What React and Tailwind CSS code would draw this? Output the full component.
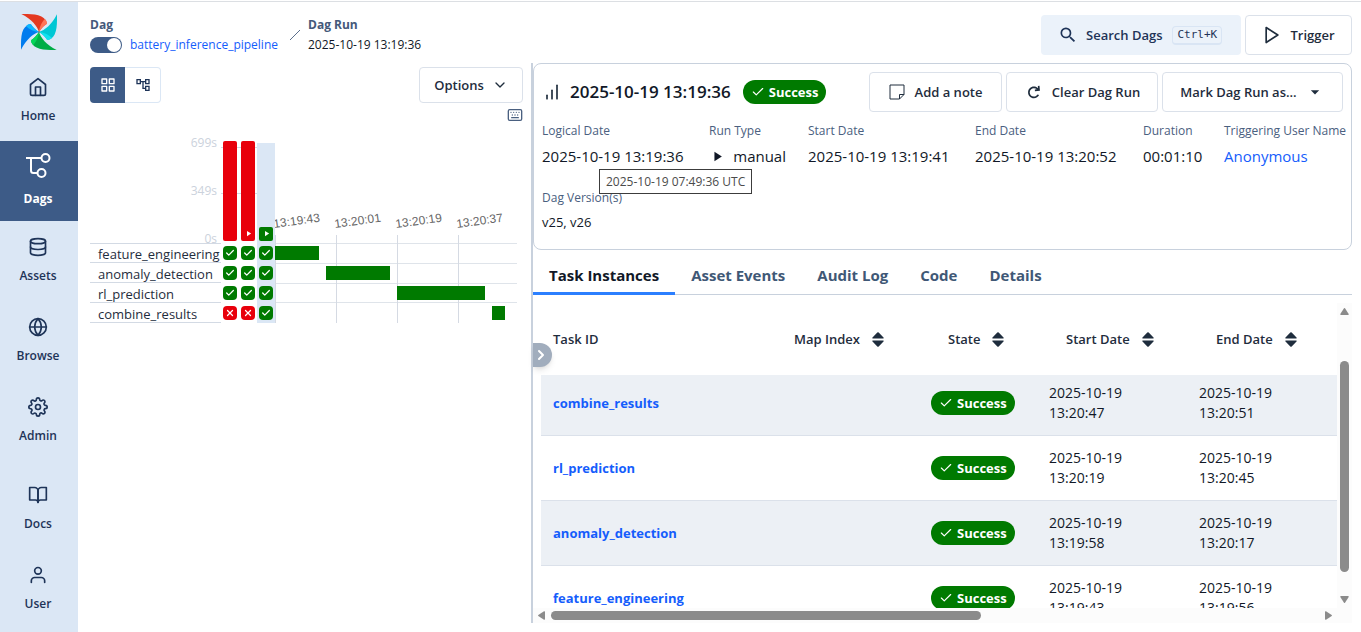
import React from "react";
import { FiHome, FiDatabase, FiGlobe, FiSettings, FiBookOpen, FiUser, FiGrid, FiPlay, FiBarChart, FiCheck, FiX, FiChevronDown, FiChevronRight } from "react-icons/fi";
import { MdSearch, MdOutlineAccountTree, MdPlayArrow, MdArrowDropDown } from "react-icons/md";
import { CgRedo } from "react-icons/cg";
import { Keyboard } from "lucide-react";

const BLADES = [
  { angle: 0, dark: "#E43921", light: "#FF7557" },
  { angle: 90, dark: "#00C7D4", light: "#11E1EE" },
  { angle: 180, dark: "#00AD46", light: "#04D659" },
  { angle: 270, dark: "#017CEE", light: "#0CB6FF" },
];

function Pinwheel() {
  return (
    <svg viewBox="0 0 106 106" className="size-[36px]" aria-hidden="true">
      {BLADES.map((b) => (
        <g key={b.angle} transform={`rotate(${b.angle} 53 53)`}>
          <path d="M1 0C20 0 44 -1 60 7C70 12 76 20 76 29C68 34 60 42 53 53C48 36 32 16 1 0Z" fill={b.dark} />
          <path d="M70 15C76 20 78 26 75 30C68 34 60 42 53 53C54 40 61 24 70 15Z" fill={b.light} />
        </g>
      ))}
      <circle cx="53" cy="53" r="2" fill="#51504F" />
    </svg>
  );
}

function DagGlyph() {
  return (
    <svg viewBox="0 0 26 26" className="size-[26px]" fill="none" stroke="currentColor" strokeWidth="2" aria-hidden="true">
      <path d="M1 5H16M6 5V17.500a2.500 2.500 0 0 0 2.500 2.500H12" />
      <circle cx="20.500" cy="5" r="4" />
      <circle cx="16.500" cy="20" r="4" />
    </svg>
  );
}

function NoteGlyph() {
  return (
    <svg viewBox="0 0 16 16" className="size-4" fill="none" stroke="currentColor" strokeLinejoin="round" aria-hidden="true">
      <path d="M1 1H15V10.500L10.500 15H1ZM15 10.500H10.500V15" />
    </svg>
  );
}

function SortGlyph() {
  return (
    <svg viewBox="0 0 12 15" className="h-[15px] w-3" fill="currentColor" aria-hidden="true">
      <path d="M5.300 0.600q.7-.7 1.400 0L11.500 5.400q.6.600-.2 1H.7q-.8-.4-.2-1z" />
      <path d="M5.300 14.400q.7.700 1.400 0L11.500 9.600q.6-.6-.2-1H.7q-.8.400-.2 1z" />
    </svg>
  );
}

function NavItem({ icon: Icon, label, active }) {
  return (
    <a
      href="#"
      className={
        active
          ? "flex h-20 flex-col items-center gap-[14px] bg-[#3d5b87] pt-[14px] pr-[2px] text-white"
          : "flex h-20 flex-col items-center gap-[10px] pt-[15px] pr-[2px] text-[#1e3458]"
      }
    >
      <span className="flex h-[22px] items-center">
        <Icon size={20} />
      </span>
      <span className={active ? "text-xs font-bold" : "text-xs font-semibold"}>{label}</span>
    </a>
  );
}

function Success() {
  return (
    <span className="inline-flex h-6 items-center gap-1 rounded-full bg-[#007a00] px-2 text-[13px] font-bold text-white">
      <FiCheck size={14} strokeWidth={2} />
      Success
    </span>
  );
}

const RUNS = [
  { bar: "h-[100px] bg-[#e8000b]", play: false, states: [1, 1, 1, 0] },
  { bar: "h-[100px] bg-[#e8000b]", play: true, states: [1, 1, 1, 0] },
  { bar: "h-[14px] bg-[#007a00]", play: true, selected: true, states: [1, 1, 1, 1] },
];
const TASKS = ["feature_engineering", "anomaly_detection", "rl_prediction", "combine_results"];

function RunColumn({ run }) {
  return (
    <div className="relative flex w-[18px] flex-col justify-end">
      <div className={run.selected ? "flex h-[180px] flex-col justify-end bg-[#dbe7f5]" : "flex flex-col justify-end"}>
        <button
          aria-label="Dag run"
          className={`mx-auto mb-[2px] flex w-[14px] items-end justify-center rounded-[2px] pb-[3px] text-white ${run.bar}`}
        >
          {run.play && <MdPlayArrow size={9} />}
        </button>
        {run.states.map((ok, i) => (
          <div key={i} className="flex h-5 items-center justify-center">
            <button
              aria-label={ok ? "Success" : "Failed"}
              className={
                ok
                  ? "flex size-[14px] items-center justify-center rounded bg-[#007a00] text-white"
                  : "flex size-[14px] items-center justify-center rounded bg-[#e8000b] text-white"
              }
            >
              {ok ? <FiCheck size={10} strokeWidth={3} /> : <FiX size={10} strokeWidth={3} />}
            </button>
          </div>
        ))}
      </div>
    </div>
  );
}

function Gantt() {
  const ticks = ["13:19:43", "13:20:01", "13:20:19", "13:20:37"];
  const bars = [
    [0, 44],
    [51, 64],
    [122, 88],
    [217, 13],
  ];
  return (
    <svg viewBox="0 0 242 113" className="h-[113px] w-[242px] self-end overflow-visible" aria-label="Task durations">
      {[33, 53, 73, 92].map((y) => (
        <rect key={y} x="0" y={y} width="242" height="1" fill="#dfe4ea" />
      ))}
      {[0, 61, 122, 183].map((x) => (
        <rect key={x} x={x} y="25" width="1" height="88" fill="#d5dae3" />
      ))}
      {bars.map(([x, w], i) => (
        <rect key={x} x={x} y={36 + i * 20} width={w} height="14" fill="#007a00" />
      ))}
      {ticks.map((t, i) => (
        <text
          key={t}
          transform={`translate(${i * 61 - 1} 18) rotate(-8)`}
          className="font-['Liberation_Sans',Arial,sans-serif] text-xs"
          fill="#666"
        >
          {t}
        </text>
      ))}
    </svg>
  );
}

const ROWS = [
  { id: "combine_results", start: "13:20:47", end: "13:20:51" },
  { id: "rl_prediction", start: "13:20:19", end: "13:20:45" },
  { id: "anomaly_detection", start: "13:19:58", end: "13:20:17" },
  { id: "feature_engineering", start: "13:19:43", end: "13:19:56" },
];

function Stat({ label, children }) {
  return (
    <div>
      <dt className="text-xs leading-5 font-medium whitespace-nowrap text-[#4a6080]">{label}</dt>
      <dd className="mt-[5px] flex items-center text-[15px] leading-5 whitespace-nowrap text-[#111827]">{children}</dd>
    </div>
  );
}

const OUTLINE = "flex items-center rounded border border-[#dbe1ea] bg-white text-[13px] font-semibold text-[#1f2d3d]";
const TABS = ["Asset Events", "Audit Log", "Code", "Details"];

export default function App() {
  return (
    <div className="h-screen overflow-hidden bg-white pt-px font-['Open_Sans','Noto_Sans',sans-serif] text-sm text-[#1f2d3d]">
      <div className="flex h-full border-t border-[#dcdfe3]">
        <nav className="flex w-[78px] shrink-0 flex-col justify-between bg-[#dbe7f5] pb-[3px]">
          <div>
            <a href="#" aria-label="Airflow" className="flex h-[59px] justify-center pt-3">
              <Pinwheel />
            </a>
            <NavItem icon={FiHome} label="Home" />
            <NavItem icon={DagGlyph} label="Dags" active />
            <NavItem icon={FiDatabase} label="Assets" />
            <NavItem icon={FiGlobe} label="Browse" />
            <NavItem icon={FiSettings} label="Admin" />
          </div>
          <div>
            <NavItem icon={FiBookOpen} label="Docs" />
            <NavItem icon={FiUser} label="User" />
          </div>
        </nav>

        <div className="flex min-w-0 flex-1 flex-col pr-[9px] pb-[9px] pl-3">
          <header className="flex h-[61px] shrink-0 items-start justify-between pt-[13px]">
            <div className="flex">
              <div>
                <div className="text-xs leading-5 font-bold text-[#45597a]">Dag</div>
                <div className="flex items-center gap-2">
                  <label className="relative flex h-4 w-8 items-center rounded-full bg-[#3d5b87]">
                    <input type="checkbox" defaultChecked aria-label="Pause Dag" className="peer absolute inset-0 opacity-0" />
                    <span className="mr-px ml-auto size-[14px] rounded-full bg-white" />
                  </label>
                  <a href="#" className="text-xs leading-5 text-[#155dfc]">battery_inference_pipeline</a>
                </div>
              </div>
              <svg viewBox="0 0 12 12" className="mt-[14px] mr-[7px] ml-[11px] size-3" stroke="#5b6f8c" aria-hidden="true">
                <path d="M1 11L11 1" />
              </svg>
              <div>
                <div className="text-xs leading-5 font-bold text-[#45597a]">Dag Run</div>
                <div className="text-xs leading-5 text-[#111827]">2025-10-19 13:19:36</div>
              </div>
            </div>
            <div className="flex gap-1">
              <button className="flex h-10 w-[200px] items-center rounded bg-[#ebf2fa] pl-[17px] font-semibold text-[#1e3458]">
                <MdSearch size={20} />
                <span className="ml-2 text-[13px]">Search Dags</span>
                <kbd className="ml-[10px] rounded border border-b-2 border-[#d9e5f4] px-1 font-['DejaVu_Sans_Mono',monospace] text-[11px] leading-4 font-normal">
                  Ctrl+K
                </kbd>
              </button>
              <button className={`${OUTLINE} h-10 w-[107px] justify-center gap-2`}>
                <FiPlay size={20} />
                Trigger
              </button>
            </div>
          </header>

          <div className="flex min-h-0 flex-1">
            <section className="w-[441px] shrink-0 pt-1 pr-2">
              <div className="flex justify-between">
                <div className="flex h-9">
                  <button aria-label="Grid view" className="flex w-[35px] items-center justify-center rounded-l bg-[#3d5b87] text-white">
                    <FiGrid size={16} />
                  </button>
                  <button aria-label="Graph view" className="flex w-9 items-center justify-center rounded-r border border-l-0 border-[#dbe7f5] text-[#1e3458]">
                    <MdOutlineAccountTree size={16} />
                  </button>
                </div>
                <button className={`${OUTLINE} h-9 w-[104px] justify-center gap-2`}>
                  Options
                  <FiChevronDown size={16} />
                </button>
              </div>
              <div className="mt-1 flex justify-end text-[#4a6080]">
                <Keyboard size={16} />
              </div>

              <div className="mt-[14px] flex">
                <div className="w-[131px]">
                  <div className="flex h-[106px] flex-col justify-between pt-[2px] pr-1 text-right text-xs leading-2 text-[#cbd2dc]">
                    <span>699s</span>
                    <span>349s</span>
                    <span>0s</span>
                  </div>
                  <div className="border-t border-[#d3dae4]">
                    {TASKS.map((t, i) => (
                      <div
                        key={t}
                        className={`flex items-center border-b border-[#d3dae4] pt-[2px] pl-2 text-[13px] leading-4 ${i === 0 ? "h-[19px]" : "h-5"}`}
                      >
                        {t}
                      </div>
                    ))}
                  </div>
                </div>
                <div className="relative flex">
                  <div className="absolute top-[10px] h-[47px] w-9 border-y border-[#d3dae4]" />
                  {RUNS.map((r, i) => (
                    <RunColumn key={i} run={r} />
                  ))}
                </div>
                <Gantt />
              </div>
            </section>

            <div className="w-[2px] shrink-0 bg-[#c8d1dd]" />

            <section className="relative flex min-w-0 flex-1 flex-col">
              <div className="h-[187px] shrink-0 rounded-lg border border-[#c8d1dd] px-2 pt-2">
                <div className="flex h-10 items-center">
                  <FiBarChart size={20} />
                  <h1 className="ml-2 text-[17px] font-semibold text-[#111827]">2025-10-19 13:19:36</h1>
                  <span className="ml-3 flex">
                    <Success />
                  </span>
                  <div className="ml-auto flex h-10 gap-1">
                    <button className={`${OUTLINE} w-[133px] justify-center gap-[10px]`}>
                      <NoteGlyph />
                      Add a note
                    </button>
                    <button className={`${OUTLINE} w-[152px] justify-center gap-2`}>
                      <CgRedo size={20} />
                      Clear Dag Run
                    </button>
                    <button className={`${OUTLINE} w-[181px] justify-center gap-2`}>
                      Mark Dag Run as...
                      <MdArrowDropDown size={20} />
                    </button>
                  </div>
                </div>
                <dl className="mt-[9px] grid grid-cols-[145px_77px_145px_146px_59px_auto] justify-start gap-x-[22px] gap-y-[22px]">
                  <Stat label="Logical Date">2025-10-19 13:19:36</Stat>
                  <Stat label="Run Type">
                    <MdPlayArrow size={17} className="mr-2" />
                    manual
                  </Stat>
                  <Stat label="Start Date">2025-10-19 13:19:41</Stat>
                  <Stat label="End Date">2025-10-19 13:20:52</Stat>
                  <Stat label="Duration">00:01:10</Stat>
                  <Stat label="Triggering User Name">
                    <a href="#" className="text-[#155dfc]">Anonymous</a>
                  </Stat>
                  <div>
                    <dt className="text-xs leading-5 font-medium whitespace-nowrap text-[#4a6080]">Dag Version(s)</dt>
                    <dd className="mt-1 text-[13px] leading-5 text-[#111827]">v25, v26</dd>
                  </div>
                </dl>
                <div
                  role="tooltip"
                  className="absolute top-[106px] left-[66px] flex h-[25px] items-center border border-[#3c3c3c] bg-white px-[6px] text-xs whitespace-nowrap text-[#4b4b4b]"
                >
                  2025-10-19 07:49:36 UTC
                </div>
              </div>

              <div className="flex h-[45px] shrink-0 border-b border-[#c8d1dd] text-[15px] font-bold text-[#3f5876]">
                <button className="-mb-px border-b-[3px] border-[#2b7fff] px-4 pt-[9px] text-[#111827]">Task Instances</button>
                {TABS.map((t) => (
                  <button key={t} className="px-4 pt-[7px]">
                    {t}
                  </button>
                ))}
              </div>

              <div className="mt-2 grid min-h-0 flex-1 grid-cols-[minmax(0,1fr)_15px] grid-rows-[minmax(0,1fr)_15px]">
                <div className="overflow-hidden pl-2">
                  <table className="w-full min-w-[796px] table-fixed border-separate border-spacing-0 text-left">
                    <colgroup>
                      <col className="w-[224px]" />
                      <col className="w-[154px]" />
                      <col className="w-[118px]" />
                      <col className="w-[150px]" />
                      <col />
                    </colgroup>
                    <thead>
                      <tr className="h-[72px] text-[13px]">
                        <th className="px-3 font-semibold">Task ID</th>
                        {["Map Index", "State", "Start Date", "End Date"].map((h) => (
                          <th key={h} className="px-3 font-semibold">
                            <button className="flex items-center gap-3 pl-[17px] whitespace-nowrap">
                              {h}
                              <SortGlyph />
                            </button>
                          </th>
                        ))}
                      </tr>
                    </thead>
                    <tbody className="leading-5 text-[#111827] [&_td]:border-b [&_td]:border-[#dbe1ea] [&_td]:px-3 [&_td]:py-0">
                      {ROWS.map((r, i) => (
                        <tr
                          key={r.id}
                          className={
                            i === 0
                              ? "h-[61px] bg-[#ecf0f5] [&_td]:pb-1!"
                              : i % 2
                                ? "h-[65px]"
                                : "h-[65px] bg-[#ecf0f5]"
                          }
                        >
                          <td>
                            <a href="#" className="text-[13px] font-bold text-[#155dfc]">{r.id}</a>
                          </td>
                          <td />
                          <td>
                            <span className="flex">
                              <Success />
                            </span>
                          </td>
                          <td>
                            2025-10-19
                            <br />
                            {r.start}
                          </td>
                          <td>
                            2025-10-19
                            <br />
                            {r.end}
                          </td>
                        </tr>
                      ))}
                    </tbody>
                  </table>
                </div>
                <div className="flex flex-col items-center bg-[#fcfcfc] py-1 text-[#8b8b8b]">
                  <svg viewBox="0 0 9 8" className="h-2 w-[9px]" fill="currentColor" aria-hidden="true">
                    <path d="M4 1.300q.5-.6 1 0L8.700 7q.3 1-.7 1H1Q0 8 .3 7z" />
                  </svg>
                  <div className="mt-[46px] w-[9px] flex-1 rounded-full bg-[#8b8b8b]" />
                  <svg viewBox="0 0 9 8" className="mt-6 h-2 w-[9px] rotate-180" fill="currentColor" aria-hidden="true">
                    <path d="M4 1.300q.5-.6 1 0L8.700 7q.3 1-.7 1H1Q0 8 .3 7z" />
                  </svg>
                </div>
                <div className="flex items-center justify-between bg-[#fcfcfc] px-1 text-[#8b8b8b]">
                  <svg viewBox="0 0 8 9" className="h-[9px] w-2" fill="currentColor" aria-hidden="true">
                    <path d="M1.300 4q-.6.500 0 1L7 8.700q1 .3 1-.7V1Q8 0 7 .3z" />
                  </svg>
                  <div className="mr-auto ml-[6px] h-[9px] w-[54%] rounded-full bg-[#8b8b8b]" />
                  <svg viewBox="0 0 8 9" className="h-[9px] w-2 rotate-180" fill="currentColor" aria-hidden="true">
                    <path d="M1.300 4q-.6.500 0 1L7 8.700q1 .3 1-.7V1Q8 0 7 .3z" />
                  </svg>
                </div>
                <div className="bg-[#fcfcfc]" />
              </div>

              <button
                aria-label="Collapse panel"
                className="absolute top-[280px] left-0 flex h-6 w-[19px] items-center rounded-r-full bg-[#a1adbd] text-white shadow-md"
              >
                <FiChevronRight size={16} strokeWidth={3} />
              </button>
            </section>
          </div>
        </div>
      </div>
    </div>
  );
}
